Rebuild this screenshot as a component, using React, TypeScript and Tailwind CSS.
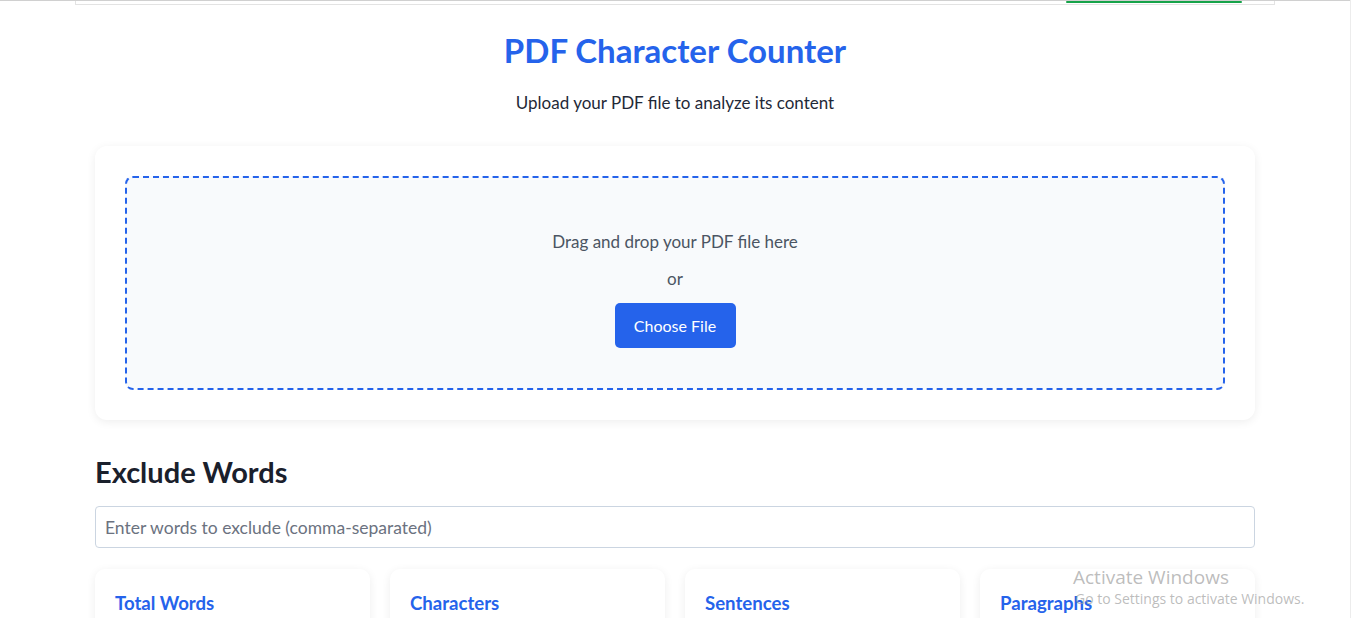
import React from "react";

const stats = ["Total Words", "Characters", "Sentences", "Paragraphs"];

export default function App() {
  return (
    <div className="relative min-h-screen bg-white border-r border-[#ececec] font-['Lato','Noto_Sans',sans-serif] overflow-hidden">
      {/* top bar, scrolled mostly out of view */}
      <div className="border-t border-[#d0d0d0]">
        <div className="mx-auto flex h-[4px] max-w-[1200px] justify-end border-x border-b border-[#e3e3e3]">
          <div className="mr-[32px] h-[2px] w-[176px] rounded-full bg-[#16a34a]" />
        </div>
      </div>

      <main className="mx-auto max-w-[1200px] px-5">
        <h1 className="mt-[27px] text-center text-[33px] font-bold leading-[36px] text-[#2563eb]">PDF Character Counter</h1>
        <p className="mt-[23px] text-center text-[17px] leading-6 text-[#1f2937]">Upload your PDF file to analyze its content</p>

        <section className="mt-[31px] rounded-xl bg-white p-[30px] shadow-[0_2px_10px_rgba(0,0,0,0.07)]">
          <div className="flex flex-col items-center rounded-lg border-2 border-dashed border-[#2563eb] bg-[#f8fafc] pb-[40px] pt-[52px]">
            <p className="text-[17px] leading-6 text-[#4b5563]">Drag and drop your PDF file here</p>
            <p className="mt-[13px] text-[17px] leading-6 text-[#4b5563]">or</p>
            <button className="mt-3 h-[45px] w-[121px] rounded-[5px] bg-[#2563eb] text-base text-white">Choose File</button>
          </div>
        </section>

        <h2 className="mt-9 text-[29px] font-bold leading-8 text-[#1a202c]">Exclude Words</h2>
        <input
          className="mt-[18px] h-[42px] w-full rounded border border-[#cbd5e1] px-[9px] text-[17.5px] text-[#1f2937] outline-none placeholder:text-[#6b7280]"
          placeholder="Enter words to exclude (comma-separated)"
        />

        <div className="mt-[21px] grid grid-cols-4 gap-5">
          {stats.map((s) => (
            <div key={s} className="h-[120px] rounded-[10px] bg-white px-5 pt-[22px] shadow-[0_2px_10px_rgba(0,0,0,0.07)]">
              <h3 className="text-[18.6px] font-bold leading-6 text-[#2563eb]">{s}</h3>
            </div>
          ))}
        </div>
      </main>

      <div className="pointer-events-none absolute left-[1073px] top-[565px] z-20 font-['Open_Sans',sans-serif] text-[#a0a0a0]/70">
        <p className="text-[19px] leading-6">Activate Windows</p>
        <p className="pl-[2px] text-[14px] leading-5">Go to Settings to activate Windows.</p>
      </div>
    </div>
  );
}
